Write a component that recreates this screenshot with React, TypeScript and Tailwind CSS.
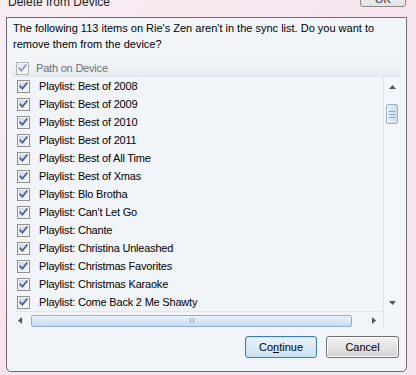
import React from "react";

const items = [
  "Playlist: Best of 2008",
  "Playlist: Best of 2009",
  "Playlist: Best of 2010",
  "Playlist: Best of 2011",
  "Playlist: Best of All Time",
  "Playlist: Best of Xmas",
  "Playlist: Blo Brotha",
  "Playlist: Can't Let Go",
  "Playlist: Chante",
  "Playlist: Christina Unleashed",
  "Playlist: Christmas Favorites",
  "Playlist: Christmas Karaoke",
  "Playlist: Come Back 2 Me Shawty",
];

function CheckBox({ dim = false }: { dim?: boolean }) {
  return (
    <svg width="13" height="13" viewBox="0 0 13 13" className="shrink-0">
      <defs>
        <linearGradient id={dim ? "cbd" : "cb"} x1="0" y1="0" x2="1" y2="1">
          <stop offset="0" stopColor={dim ? "#e2e4e8" : "#cdd1d8"} />
          <stop offset="1" stopColor="#fbfbfb" />
        </linearGradient>
      </defs>
      <rect x="0.5" y="0.5" width="12" height="12" fill="#f6f6f6" stroke={dim ? "#b0b3b8" : "#8e8f8f"} />
      <rect x="2" y="2" width="9" height="9" fill={`url(#${dim ? "cbd" : "cb"})`} />
      <path
        d="M3.2 6.2 L5.4 8.6 L9.8 3.2"
        fill="none"
        stroke={dim ? "#8f9cc0" : "#4a5f97"}
        strokeWidth="1.7"
        strokeLinecap="square"
      />
    </svg>
  );
}

function Tri({ dir }: { dir: "up" | "down" | "left" | "right" }) {
  const d = {
    up: "M0 4 L3.5 0 L7 4 Z",
    down: "M0 0 L7 0 L3.5 4 Z",
    left: "M4 0 L4 7 L0 3.5 Z",
    right: "M0 0 L4 3.5 L0 7 Z",
  }[dir];
  const vertical = dir === "up" || dir === "down";
  return (
    <svg width={vertical ? 7 : 4} height={vertical ? 4 : 7} viewBox={vertical ? "0 0 7 4" : "0 0 4 7"}>
      <path d={d} fill="#4f5862" />
    </svg>
  );
}

export default function App() {
  return (
    <div
      className="w-[416px] h-[375px] overflow-hidden bg-gradient-to-br from-[#f9eef4] via-[#f7e4ee] to-[#f6e7ef] text-black"
      style={{ fontFamily: '"Liberation Sans", Arial, sans-serif' }}
    >
      {/* title bar */}
      <div className="h-[17px] flex items-start">
        <div className="ml-[8px] -mt-[6px] text-[12px] leading-[16px] text-[#1e1e1e]">Delete from Device</div>
        <div className="ml-auto mr-[10px] -mt-[9px] w-[46px] h-[16px] rounded-[3px] border border-[#8a8a8a] bg-gradient-to-b from-[#f4f4f4] to-[#e2e2e2] text-[11px] leading-[14px] text-center text-[#333]">
          OK
        </div>
      </div>

      {/* content panel */}
      <div className="ml-[6px] w-[401px] h-[355px] border border-[#6f6b72] rounded-b-[5px] bg-[#f1f5fa] flex flex-col">
        <div className="px-[6px] pt-[2px] text-[11px] leading-[16px] whitespace-nowrap">
          The following 113 items on Rie's Zen aren't in the sync list. Do you want to
          <br />
          remove them from the device?
        </div>

        <div className="ml-[5px] mt-[8px] w-[388px] flex flex-col">
          <div className="h-[17px] flex items-center pl-[4px] gap-[7px] bg-gradient-to-b from-[#f2f5f9] to-[#e7ecf2] border-b border-[#dfe5ec] text-[11px] tracking-[-0.2px] text-[#707070]">
            <CheckBox dim />
            <span>Path on Device</span>
          </div>

          <div className="flex">
            <div className="w-[371px] flex flex-col border-b border-[#e2e7ee]">
              {items.map((t) => (
                <div key={t} className="h-[18px] flex items-center pl-[5px] gap-[9px] text-[11px] tracking-[-0.2px]">
                  <CheckBox />
                  <span>{t}</span>
                </div>
              ))}
            </div>
            <div className="w-[17px] border-l border-[#dde4ec] bg-[#f3f6fa] flex flex-col items-center pt-[8px]">
              <Tri dir="up" />
              <div className="mt-[15px] w-[12px] h-[20px] rounded-[2px] border border-[#9ab0c9] bg-gradient-to-r from-[#e9f1fb] to-[#c9dcef] flex flex-col items-center justify-center gap-[2px]">
                <div className="w-[6px] h-px bg-[#8ea6c2]" />
                <div className="w-[6px] h-px bg-[#8ea6c2]" />
                <div className="w-[6px] h-px bg-[#8ea6c2]" />
              </div>
              <div className="flex-1" />
              <div className="mb-[7px]">
                <Tri dir="down" />
              </div>
            </div>
          </div>

          <div className="h-[17px] flex items-center">
            <div className="w-[371px] flex items-center">
              <div className="ml-[6px]">
                <Tri dir="left" />
              </div>
              <div className="ml-[9px] w-[321px] h-[12px] rounded-[2px] border border-[#93b1d3] bg-gradient-to-b from-[#e8f1fb] to-[#c8dcf2] flex items-center justify-center gap-[2px]">
                <div className="w-px h-[5px] bg-[#8ea6c2]" />
                <div className="w-px h-[5px] bg-[#8ea6c2]" />
              </div>
              <div className="ml-[20px]">
                <Tri dir="right" />
              </div>
            </div>
            <div className="w-[17px] h-full border-l border-[#dde4ec]" />
          </div>
        </div>

        <div className="mt-[7px] mr-[7px] flex justify-end gap-[9px] text-[11px]">
          <button className="w-[72px] h-[22px] rounded-[3px] border border-[#3c7fb1] bg-gradient-to-b from-[#e9f4fc] to-[#c9e1f2] shadow-[inset_0_0_0_1px_#c5e6f9] text-black">
            Co<span className="underline">n</span>tinue
          </button>
          <button className="w-[73px] h-[22px] rounded-[3px] border border-[#707070] bg-gradient-to-b from-[#f3f3f3] to-[#d3d3d3] shadow-[inset_0_0_0_1px_#fcfcfc] text-black">
            Cancel
          </button>
        </div>
      </div>
    </div>
  );
}
